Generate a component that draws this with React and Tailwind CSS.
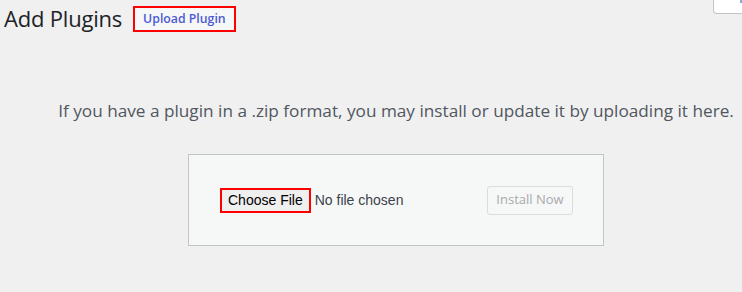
import React from 'react';

const App = () => {
  return (
    <div className="relative w-[742px] h-[292px] overflow-hidden bg-[#f0f0f1] font-['Open_Sans','Noto_Sans',sans-serif]">
      {/* help tab cut off at the top right */}
      <div className="absolute right-[-20px] top-0 h-[14px] w-[49px] overflow-hidden rounded-bl-[4px] border-b border-l border-[#c3c4c7] bg-white">
        <span className="block mt-[-14px] pl-[5px] text-[13px] leading-[18px] text-[#2271b1]">Help</span>
      </div>

      <div className="flex items-center pl-[4px] pt-[4px]">
        <h1 className="text-[22px] leading-[29px] font-normal tracking-[-0.2px] text-[#1d2327]">Add Plugins</h1>
        <div className="ml-[11px] mt-[1px] border-2 border-[#ff0000]">
          <button className="block h-[22px] px-[8px] bg-[#f6f7f7] text-[12.3px] font-semibold leading-[22px] text-[#4c5bd4]">
            Upload Plugin
          </button>
        </div>
      </div>

      <div className="pl-[50px]">
        <p className="mt-[66px] text-center text-[17.2px] leading-[24px] text-[#50575e]">
          If you have a plugin in a .zip format, you may install or update it by uploading it here.
        </p>

        <div className="mx-auto mt-[31px] flex h-[92px] w-[416px] items-center justify-between border border-[#c3c4c7] bg-[#f6f7f7] pl-[31px] pr-[30px]">
          <div className="flex items-center font-['Liberation_Sans',Arial,sans-serif]">
            <div className="border-2 border-[#ff0000]">
              <span className="block h-[21px] bg-[#efefef] px-[6px] text-[14px] leading-[21px] text-black">Choose File</span>
            </div>
            <span className="ml-[4px] text-[14px] text-[#3c434a]">No file chosen</span>
          </div>
          <button className="h-[29px] w-[86px] rounded-[3px] border border-[#dcdcde] bg-[#f6f7f7] text-[13px] text-[#a7aaad]">
            Install Now
          </button>
        </div>
      </div>
    </div>
  );
};

export default App;
